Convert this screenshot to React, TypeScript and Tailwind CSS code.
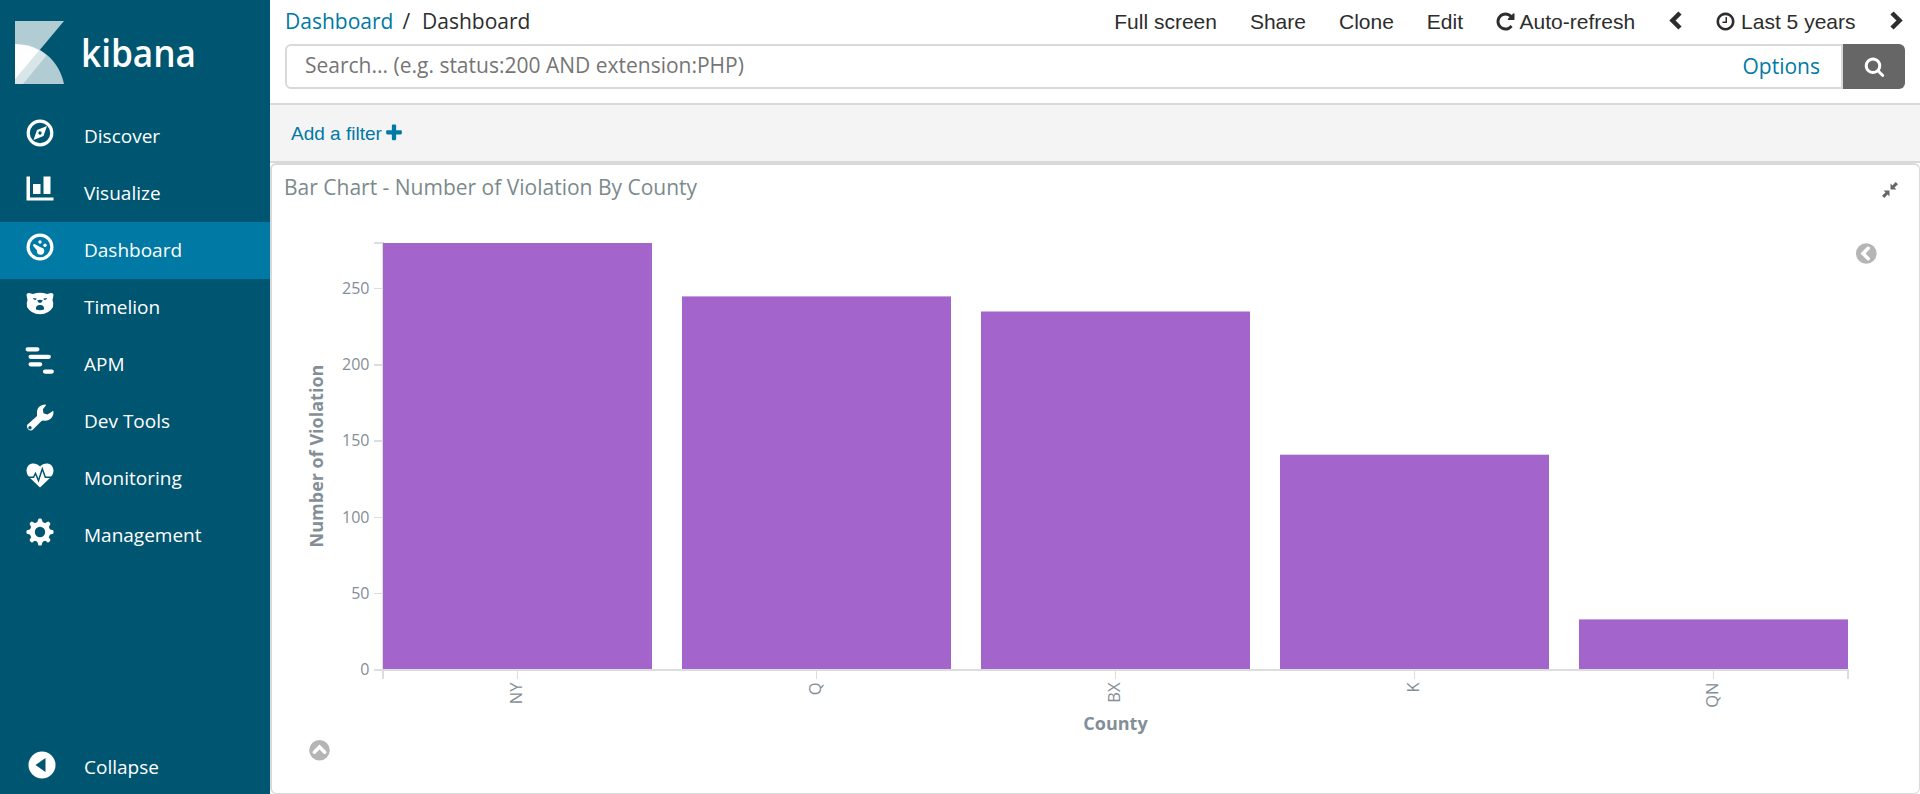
import type { ReactNode } from 'react';

const OPEN = "font-['Open_Sans','Noto_Sans',sans-serif]";
const ARIAL = "font-['Liberation_Sans',Arial,sans-serif]";

function FaGlyph({ d, className }: { d: string; className: string }) {
  return (
    <svg viewBox="0 0 1792 1792" fill="currentColor" className={className}>
      <path d={d} />
    </svg>
  );
}

const REPEAT =
  'M1664 256v448q0 26-19 45t-45 19h-448q-42 0-59-40-17-39 14-69l138-138q-148-137-349-137-104 0-198.500 40.500t-163.500 109.500-109.500 163.500-40.500 198.500 40.500 198.500 109.500 163.500 163.500 109.500 198.500 40.500q119 0 225-52t179-147q7-10 23-12 15 0 25 9l137 138q9 8 9.500 20.500t-7.500 22.500q-109 132-264 204.500t-327 72.500q-156 0-298-61t-245-164-164-245-61-298 61-298 164-245 245-164 298-61q147 0 284.500 55.500t244.500 156.500l130-129q29-31 70-14 39 17 39 59z';
const CLOCK =
  'M1024 544v448q0 14-9 23t-23 9h-320q-14 0-23-9t-9-23v-64q0-14 9-23t23-9h224v-352q0-14 9-23t23-9h64q14 0 23 9t9 23zm416 352q0-148-73-273t-198-198-273-73-273 73-198 198-73 273 73 273 198 198 273 73 273-73 198-198 73-273zm224 0q0 209-103 385.500t-279.500 279.500-385.500 103-385.500-103-279.500-279.500-103-385.500 103-385.500 279.500-279.500 385.500-103 385.500 103 279.500 279.500 103 385.500z';
const PLUS =
  'M1600 736v192q0 40-28 68t-68 28h-416v416q0 40-28 68t-68 28h-192q-40 0-68-28t-28-68v-416h-416q-40 0-68-28t-28-68v-192q0-40 28-68t68-28h416v-416q0-40 28-68t68-28h192q40 0 68 28t28 68v416h416q40 0 68 28t28 68z';
const SEARCH =
  'M1216 832q0-185-131.500-316.500t-316.500-131.500-316.500 131.500-131.500 316.500 131.500 316.500 316.500 131.500 316.500-131.500 131.500-316.500zm512 832q0 52-38 90t-90 38q-54 0-90-38l-343-342q-179 124-399 124-143 0-273.500-55.500t-225-150-150-225-55.500-273.500 55.500-273.500 150-225 225-150 273.500-55.500 273.500 55.500 225 150 150 225 55.500 273.500q0 220-124 399l343 343q37 37 37 90z';

const ICON = 'block h-[30px] w-[30px] overflow-visible';

function DiscoverIcon() {
  return (
    <svg viewBox="0 0 30 30" className={ICON}>
      <circle cx="15" cy="15" r="11.8" fill="none" stroke="#fff" strokeWidth="3.2" />
      <path fill="#fff" fillRule="evenodd" d="M22 8 18.500 18 8.500 22 12 12ZM15 13.300a1.700 1.700 0 1 0 0 3.400 1.700 1.700 0 0 0 0-3.400Z" />
    </svg>
  );
}
function VisualizeIcon() {
  return (
    <svg viewBox="0 0 30 30" className={ICON}>
      <path fill="#fff" d="M1.500 1.500H5V22.500H28.500V25.500H1.500ZM8 9H15.500V19H8ZM18.500 1.500H25.500V19H18.500Z" />
    </svg>
  );
}
function DashboardIcon() {
  return (
    <svg viewBox="0 0 30 30" className={ICON}>
      <circle cx="15" cy="15" r="11.900" fill="none" stroke="#fff" strokeWidth="3.200" />
      <path fill="#fff" d="M8.400 12.200Q9.500 11.600 10.500 12.600L16 15.500A3.600 3.600 0 1 1 12.100 18.400L8.600 14.600Q7.700 13.200 8.400 12.200Z" />
      <circle cx="15" cy="10" r="1.700" fill="#fff" />
      <circle cx="20" cy="13.200" r="1.700" fill="#fff" />
    </svg>
  );
}
function TimelionIcon() {
  return (
    <svg viewBox="0 0 30 30" className={ICON}>
      <path fill="#fff" d="M1.500 6Q1.500 4 4 4L8 5Q15 2.500 22 5L26 4Q28.500 4 28.500 6L27.500 11Q28.800 14 28 18Q24 25 15 25.300Q6 25 2 18Q1.200 14 2.500 11Z" />
      <g fill="#005571">
        <path d="M8 9 11.500 9.600 11 10.900 8.800 10.400ZM22 9 18.500 9.600 19 10.900 21.200 10.400Z" />
        <path d="M12.200 11.500Q15 10 17.800 11.500Q17 13.500 15 14Q13 13.500 12.200 11.500ZM11 20.500Q10.500 17 13.300 16.300L15 15.900 16.700 16.300Q19.500 17 19 20.500Q15 21.800 11 20.500Z" />
      </g>
    </svg>
  );
}
function ApmIcon() {
  return (
    <svg viewBox="0 0 30 30" className={ICON}>
      <path fill="none" stroke="#fff" strokeWidth="4.200" strokeLinecap="round" d="M2.600 3.300H12.400M5.600 10.800H23.800M5.600 18.300H15.200M20 25.600H26.800" />
    </svg>
  );
}
function WrenchIcon() {
  return (
    <svg viewBox="0 0 30 30" className={ICON}>
      <path
        fill="#fff"
        fillRule="evenodd"
        d="M20.500 1.500Q21.500 1.800 20.800 2.400L17.900 6.200 18.400 10.200 22.500 11.600 27.500 8.200Q28.500 7.800 28.500 9C28.500 15 24 18.500 18.500 17.500Q17 17.500 16.500 18L7.500 27A4 4 0 0 1 2.200 21.800L11.500 13.500Q12.300 12.500 12 11C11.500 5 15 1.500 20.500 1.500ZM5 23.100A1.700 1.700 0 1 0 5 26.500 1.700 1.700 0 0 0 5 23.100Z"
      />
    </svg>
  );
}
function MonitoringIcon() {
  return (
    <svg viewBox="0 0 30 30" className={ICON}>
      <path fill="#fff" d="M15 27.500 4 17Q1.500 14 1.500 11C1.500 2.500 10.500 1.500 15 6.500C19.500 1.500 28.500 2.500 28.500 11Q28.500 14 26 17Z" />
      <path fill="none" stroke="#005571" strokeWidth="1.500" d="M2 17.300H8.500L10.500 13.500 13.500 20.500 17.300 8.800 20.300 17.300H28" />
    </svg>
  );
}
function ManagementIcon() {
  return (
    <svg viewBox="0 0 30 30" className={ICON}>
      <circle cx="15" cy="15" r="7.700" fill="none" stroke="#fff" strokeWidth="5" />
      {[0, 45, 90, 135, 180, 225, 270, 315].map((a) => (
        <path key={a} fill="#fff" transform={`rotate(${a} 15 15)`} d="M10.500 7Q12.700 6 13 3Q13.100 1.500 14.300 1.500H15.700Q16.900 1.500 17 3Q17.300 6 19.500 7Z" />
      ))}
    </svg>
  );
}

const NAV: { label: string; icon: ReactNode; active?: boolean }[] = [
  { label: 'Discover', icon: <DiscoverIcon /> },
  { label: 'Visualize', icon: <VisualizeIcon /> },
  { label: 'Dashboard', icon: <DashboardIcon />, active: true },
  { label: 'Timelion', icon: <TimelionIcon /> },
  { label: 'APM', icon: <ApmIcon /> },
  { label: 'Dev Tools', icon: <WrenchIcon /> },
  { label: 'Monitoring', icon: <MonitoringIcon /> },
  { label: 'Management', icon: <ManagementIcon /> },
];

function NavItem({ label, icon, active }: { label: string; icon: ReactNode; active?: boolean }) {
  return (
    <a className={`flex h-[57px] shrink-0 items-start ${active ? 'bg-[#0079a5]' : ''}`}>
      <span className="w-[84px] pt-[10px] pl-[24.500px]">{icon}</span>
      <span className="pt-[14px] text-[19px] leading-[28px] text-white">{label}</span>
    </a>
  );
}

function Sidebar() {
  return (
    <nav className="flex h-full w-[270px] shrink-0 flex-col overflow-hidden bg-[#005571]">
      <div className="flex h-[108px] shrink-0 pt-[21px] pl-[15px]">
        <svg viewBox="0 0 49 63" className="h-[63px] w-[49px]">
          <path fill="#b2ccd4" d="M0 0H49L0 58.500Z" />
          <path fill="#b2ccd4" d="M0 23C27 23 44.500 41 49 63H0Z" />
          <path fill="#d8e5e9" d="M24.500 29.300Q28.500 31.500 31.500 34.500L8 63H0V58.500Z" />
          <path fill="#fff" d="M0 23Q13.500 23 24.500 29.300L0 58.500Z" />
        </svg>
        <svg viewBox="0 0 170 63" className="ml-[16.500px] h-[63px] w-[170px] overflow-visible">
          <text x="0" y="46" textLength="115" lengthAdjust="spacingAndGlyphs" fill="#fff" fontSize="38" fontWeight="600" fontFamily="'Open Sans'">
            kibana
          </text>
        </svg>
      </div>
      {NAV.map((n) => (
        <NavItem key={n.label} {...n} />
      ))}
      <div className="mt-auto -mb-[2px]">
        <NavItem
          label="Collapse"
          icon={
            <svg viewBox="0 0 30 30" className={ICON}>
              <circle cx="17" cy="16" r="13.500" fill="#fff" />
              <path fill="#005571" d="M10.500 16 20.500 9V23Z" />
            </svg>
          }
        />
      </div>
    </nav>
  );
}

function TopBar() {
  return (
    <header className="flex h-[44px] shrink-0 items-start pl-[15px] text-[21px] text-[#2d2d2d]">
      <div className="flex pt-[6px] leading-[30px]">
        <span className="text-[#0079a5]">Dashboard</span>
        <span className="pr-[12px] pl-[9px]">/</span>
        <span>Dashboard</span>
      </div>
      <div className={`ml-auto flex gap-[33px] pt-[7px] leading-[30px] ${ARIAL}`}>
        <span>Full screen</span>
        <span>Share</span>
        <span>Clone</span>
        <span>Edit</span>
        <span className="flex">
          <FaGlyph d={REPEAT} className="mt-[4px] -ml-[1.500px] h-[21px] w-[21px]" />
          <span className="ml-[4px]">Auto-refresh</span>
        </span>
        <svg viewBox="0 0 14 20" className="ml-[1px] mt-[4px] h-[20px] w-[14px]">
          <path d="M11 2 3.500 9.500 11 17" fill="none" stroke="#2d2d2d" strokeWidth="4.500" />
        </svg>
        <span className="flex">
          <FaGlyph d={CLOCK} className="mt-[4px] -ml-[1.500px] h-[21px] w-[21px]" />
          <span className="ml-[5.500px]">Last 5 years</span>
        </span>
        <svg viewBox="0 0 14 20" className="mr-[17.500px] mt-[4px] h-[20px] w-[14px]">
          <path d="M3 2 10.500 9.500 3 17" fill="none" stroke="#2d2d2d" strokeWidth="4.500" />
        </svg>
      </div>
    </header>
  );
}

function SearchBar() {
  return (
    <div className="flex h-[59px] shrink-0 items-start px-[15px]">
      <div className="flex h-[45px] flex-1 items-center rounded-l-[6px] border-2 border-[#d9d9d9] pr-[21px] pl-[18px] text-[21px] leading-[30px]">
        <span className="flex-1 pb-[3px] text-[#757575]">Search... (e.g. status:200 AND extension:PHP)</span>
        <span className="pb-[1px] text-[#0079a5]">Options</span>
      </div>
      <div className="flex h-[45px] w-[62px] items-center justify-center rounded-r-[6px] bg-[#666] text-white">
        <FaGlyph d={SEARCH} className="h-[21px] w-[21px]" />
      </div>
    </div>
  );
}

const BARS = [
  { label: 'NY', top: 243 },
  { label: 'Q', top: 296.4 },
  { label: 'BX', top: 311.5 },
  { label: 'K', top: 454.700 },
  { label: 'QN', top: 619.4 },
];
const TICKS = [
  { v: 250, y: 288.5 },
  { v: 200, y: 365 },
  { v: 150, y: 441 },
  { v: 100, y: 517.5 },
  { v: 50, y: 593.5 },
  { v: 0, y: 670 },
];

function Chart() {
  return (
    <svg viewBox="272 210 1647 583" className="block h-[583px] w-[1647px]" fontFamily="'Open Sans'" fill="#848e96">
      <g stroke="#ddd" fill="none" strokeWidth="1.500">
        <path strokeWidth="2" d="M374 243H384" />
        <path d="M382.700 243V679" />
        {TICKS.map((t) => (
          <path key={t.v} strokeWidth={t.y % 1 ? 1 : 2} d={`M374 ${t.y}H383`} />
        ))}
      </g>
      {BARS.map((b, i) => (
        <rect key={b.label} x={383 + i * 299} y={b.top} width="269" height={669.5 - b.top} fill="#a365cb" />
      ))}
      <path stroke="#ddd" strokeWidth="2" d="M374 670H1849M383 670V679M1848 669V679" />
      {BARS.map((b, i) => (
        <g key={b.label}>
          <path stroke="#ddd" strokeWidth="1" d={`M${517.5 + i * 299} 671V679`} />
          <text fontSize="16.500" textAnchor="end" transform={`translate(${522.2 + i * 299} 682.500) rotate(-90)`}>
            {b.label}
          </text>
        </g>
      ))}
      {TICKS.map((t) => (
        <text key={t.v} x="369.500" y={t.y + 5} fontSize="16" textAnchor="end">
          {t.v}
        </text>
      ))}
      <text fontSize="18" fontWeight="700" textAnchor="middle" transform="translate(323 456) rotate(-90)">
        Number of Violation
      </text>
      <text x="1115.500" y="730" fontSize="18" fontWeight="700" textAnchor="middle">
        County
      </text>
      <g strokeWidth="3.500" stroke="#fff" strokeLinecap="round">
        <circle cx="319.500" cy="750.300" r="10.300" fill="#b5b5b5" stroke="none" />
        <path fill="none" d="M314.300 752.200 319.500 747 324.700 752.200" />
        <circle cx="1866.300" cy="253.500" r="10.300" fill="#b5b5b5" stroke="none" />
        <path fill="none" d="M1868.200 248.300 1863 253.500 1868.200 258.700" />
      </g>
    </svg>
  );
}

export default function App() {
  return (
    <div className={`flex h-[794px] w-[1920px] overflow-hidden bg-white ${OPEN}`}>
      <Sidebar />
      <main className="flex min-w-0 flex-1 flex-col">
        <TopBar />
        <SearchBar />
        <div className={`flex h-[60px] shrink-0 items-center border-y-2 border-[#d9d9d9] bg-[#f4f4f4] pl-[21px] text-[19px] text-[#0079a5] ${ARIAL}`}>
          <span className="pt-[2px]">Add a filter</span>
          <FaGlyph d={PLUS} className="ml-[2px] h-[20px] w-[20px]" />
        </div>
        <section className="flex flex-1 flex-col rounded-[6px] border-2 border-r border-b border-[#d9d9d9]">
          <div className="flex h-[45px] shrink-0 items-start justify-between pr-[21px] pl-[12px]">
            <h2 className="pt-[7px] text-[21px] leading-[30px] text-[#7b8a8b]">Bar Chart - Number of Violation By County</h2>
            <svg viewBox="0 0 15 15" className="mt-[16.500px] h-[16px] w-[16px]" fill="#666">
              <path d="M8 1.500 9.800 3.300 12.800 0 15 2.200 11.700 5.200 13.500 7H8ZM1.500 8H7V13.500L5.200 11.700 2.200 15 0 12.800 3.300 9.800Z" />
            </svg>
          </div>
          <Chart />
        </section>
      </main>
    </div>
  );
}
